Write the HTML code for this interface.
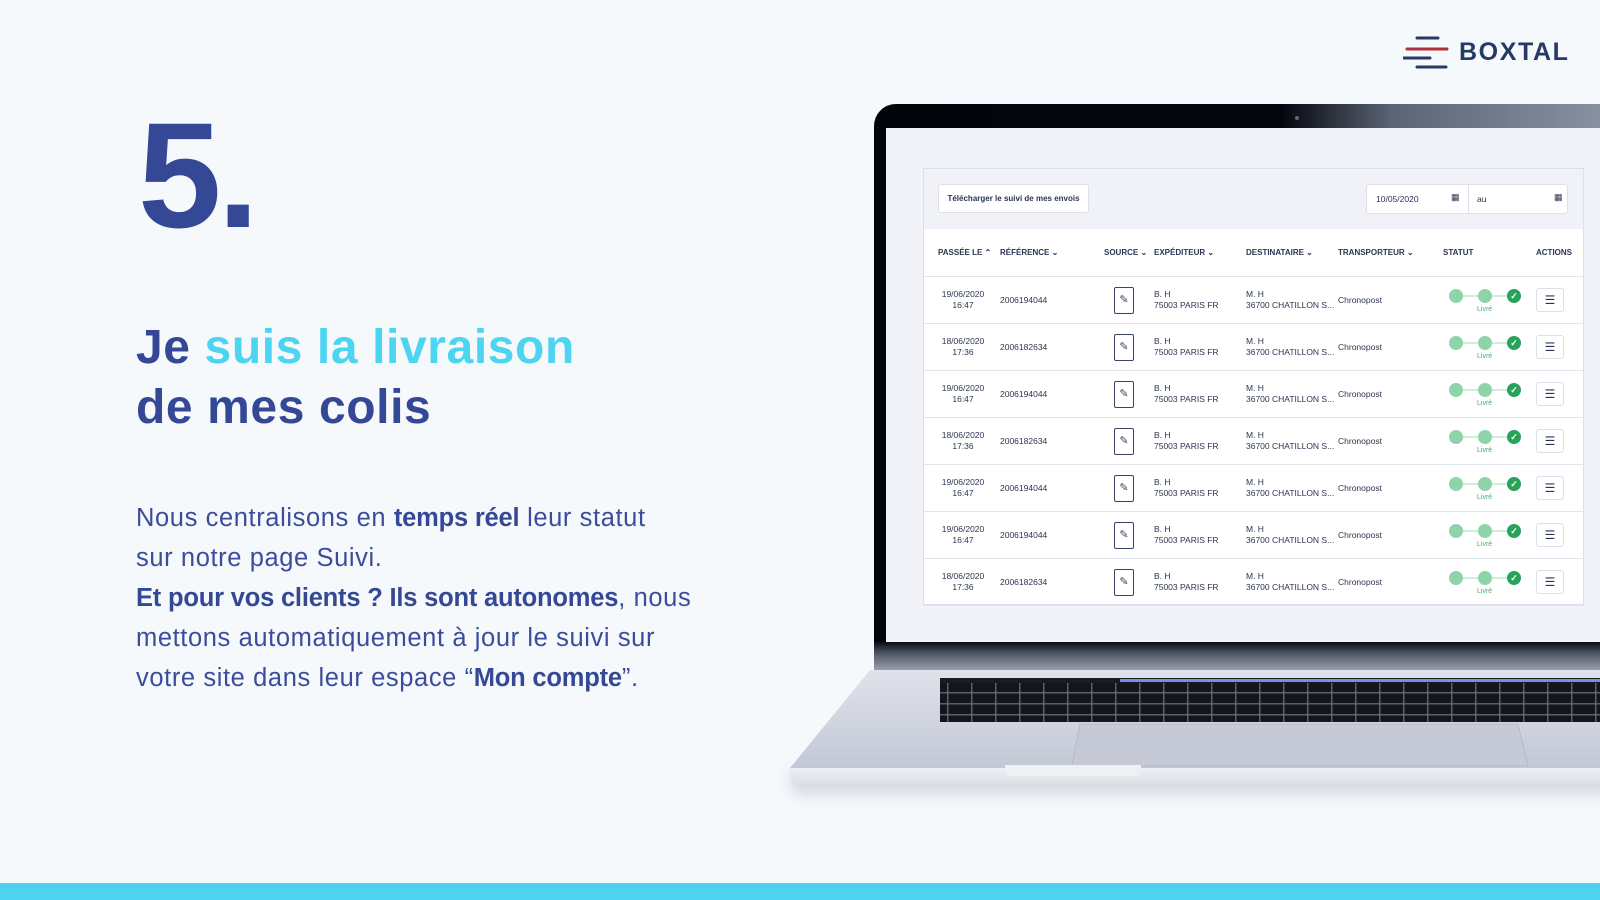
<!DOCTYPE html>
<html><head><meta charset="utf-8">
<style>
*{margin:0;padding:0;box-sizing:border-box}
body{width:1600px;height:900px;overflow:hidden;background:#f5f9fc;font-family:"Liberation Sans",sans-serif;position:relative}
.abs{position:absolute}
.five{left:138px;top:100px;font-size:150px;font-weight:bold;color:#354896;letter-spacing:-4px;line-height:1}
.h{left:136px;font-size:48px;font-weight:bold;color:#354896;line-height:1;white-space:nowrap;letter-spacing:0.6px}
.h span{color:#4dd4f0}
.p{left:136px;top:498px;font-size:25.5px;color:#3c4c9c;line-height:40px;width:600px;font-weight:300;letter-spacing:0.6px;white-space:nowrap}
.p b{font-weight:bold;color:#354896;letter-spacing:-0.2px}
.bar{left:0;top:883px;width:1600px;height:17px;background:#4dd3ef}
.tbl{font-size:8.5px;color:#2b3550}
.th{font-size:8px;font-weight:bold;color:#2b3550;top:248px}
.row{left:923px;width:661px;height:47px;border-bottom:1px solid #e3e5ee}
.dot{width:14px;height:14px;border-radius:50%;background:#8fd4a8}
</style></head><body>
<svg class="abs" style="left:1403px;top:34px" width="48" height="36">
<line x1="14" y1="4" x2="35" y2="4" stroke="#263a66" stroke-width="3" stroke-linecap="round"/>
<line x1="4" y1="15" x2="44" y2="15" stroke="#b2303c" stroke-width="3" stroke-linecap="round"/>
<line x1="1" y1="24" x2="27" y2="24" stroke="#263a66" stroke-width="3" stroke-linecap="round"/>
<line x1="14" y1="33" x2="43" y2="33" stroke="#263a66" stroke-width="3" stroke-linecap="round"/>
</svg>
<div class="abs" style="left:1459px;top:38px;font-size:25px;color:#263a66;letter-spacing:1.6px;font-weight:600">BOXTAL</div>

<div class="abs five">5.</div>
<div class="abs h" style="top:324px">Je <span>suis la livraison</span></div>
<div class="abs h" style="top:384px">de mes colis</div>
<div class="abs p">Nous centralisons en <b>temps réel</b> leur statut<br>sur notre page Suivi.<br><b>Et pour vos clients ? Ils sont autonomes</b>, nous<br>mettons automatiquement à jour le suivi sur<br>votre site dans leur espace “<b>Mon compte</b>”.</div>

<div class="abs" style="left:790px;top:765px;width:820px;height:22px;background:linear-gradient(#f2f3f7,#d8dbe3);border-radius:0 0 0 12px;box-shadow:0 8px 14px rgba(120,130,150,.25)"></div>
<svg class="abs" style="left:780px;top:660px" width="820" height="110">
<defs><linearGradient id="g" x1="0" y1="0" x2="0" y2="1"><stop offset="0" stop-color="#dfe2ea"/><stop offset="1" stop-color="#c3c8d6"/></linearGradient>
<pattern id="k" width="24" height="11" patternUnits="userSpaceOnUse"><rect width="24" height="11" fill="#5a606e"/><rect x="0.5" y="0.5" width="22.5" height="9.5" rx="1" fill="#14161b"/></pattern></defs>
<polygon points="90,10 820,10 820,108 10,108" fill="url(#g)"/>
<rect x="160" y="18" width="660" height="44" fill="url(#k)"/>
<rect x="160" y="18" width="660" height="5" fill="#1a1c22"/>
<rect x="340" y="19" width="480" height="3" fill="#7a8ce8"/>
<polygon points="300,64 738,64 748,106 292,106" fill="#c6cad7" stroke="#a9aebe" stroke-width="0.6"/>
</svg>
<div class="abs" style="left:1005px;top:765px;width:136px;height:11px;background:#eef0f4;border-radius:0 0 6px 6px"></div>
<div class="abs" style="left:874px;top:104px;width:740px;height:566px;background:linear-gradient(90deg,#03050b 0%,#03060d 55%,#5c6475 70%,#8b93a3 100%);border-radius:22px 0 0 0"></div>
<div class="abs" style="left:874px;top:642px;width:740px;height:28px;background:linear-gradient(#0a0c12 0%,#4e5564 40%,#9aa0ad 100%)"></div>
<div class="abs" style="left:1295px;top:116px;width:4px;height:4px;border-radius:50%;background:#667"></div>
<div class="abs" style="left:886px;top:128px;width:714px;height:514px;background:#f2f3f8"></div>
<div class="abs" style="left:923px;top:168px;width:661px;height:437px;background:#fff;border:1px solid #dcdfea"></div>
<div class="abs" style="left:924px;top:169px;width:659px;height:60px;background:#f0f2f7"></div>
<div class="abs tbl" style="left:938px;top:184px;width:151px;height:29px;background:#fff;border:1px solid #dde0ea;border-radius:3px;font-weight:bold;font-size:8px;line-height:27px;text-align:center">Télécharger le suivi de mes envois</div>
<div class="abs tbl" style="left:1366px;top:184px;width:202px;height:30px;background:#fff;border:1px solid #dde0ea;border-radius:3px"></div>
<div class="abs" style="left:1468px;top:185px;width:1px;height:28px;background:#dde0ea"></div>
<div class="abs tbl" style="left:1376px;top:194px;font-size:8.5px">10/05/2020</div>
<div class="abs tbl" style="left:1477px;top:194px;font-size:8.5px">au</div>
<div class="abs tbl" style="left:1451px;top:192px;font-size:9px">▦</div>
<div class="abs tbl" style="left:1554px;top:192px;font-size:9px">▦</div>
<div class="abs th" style="left:938px">PASSÉE LE ⌃</div>
<div class="abs th" style="left:1000px">RÉFÉRENCE ⌄</div>
<div class="abs th" style="left:1104px">SOURCE ⌄</div>
<div class="abs th" style="left:1154px">EXPÉDITEUR ⌄</div>
<div class="abs th" style="left:1246px">DESTINATAIRE ⌄</div>
<div class="abs th" style="left:1338px">TRANSPORTEUR ⌄</div>
<div class="abs th" style="left:1443px">STATUT</div>
<div class="abs th" style="left:1536px">ACTIONS</div>
<div class="abs" style="left:924px;top:276px;width:659px;height:1px;background:#e3e5ee"></div>

<div id="rows"></div>
<script>
var d=[["19/06/2020","16:47","2006194044"],["18/06/2020","17:36","2006182634"],["19/06/2020","16:47","2006194044"],["18/06/2020","17:36","2006182634"],["19/06/2020","16:47","2006194044"],["19/06/2020","16:47","2006194044"],["18/06/2020","17:36","2006182634"]];
var h="";
d.forEach(function(r,i){var t=277+i*47,c=t+23;
h+='<div class="abs row" style="top:'+t+'px"></div>';
h+='<div class="abs tbl" style="left:938px;top:'+(c-11)+'px;width:50px;text-align:center;line-height:11px">'+r[0]+'<br>'+r[1]+'</div>';
h+='<div class="abs tbl" style="left:1000px;top:'+(c-5)+'px">'+r[2]+'</div>';
h+='<div class="abs" style="left:1114px;top:'+(c-13)+'px;width:20px;height:27px;border:1.5px solid #3b4562;border-radius:2px;font-size:11px;text-align:center;line-height:24px;color:#3b4562">✎</div>';
h+='<div class="abs tbl" style="left:1154px;top:'+(c-11)+'px;line-height:11px">B. H<br>75003 PARIS FR</div>';
h+='<div class="abs tbl" style="left:1246px;top:'+(c-11)+'px;line-height:11px">M. H<br>36700 CHATILLON S...</div>';
h+='<div class="abs tbl" style="left:1338px;top:'+(c-5)+'px">Chronopost</div>';
h+='<div class="abs" style="left:1456px;top:'+(c-5)+'px;width:56px;height:2px;background:#cdeedb"></div>';
h+='<div class="abs dot" style="left:1449px;top:'+(c-11)+'px"></div><div class="abs dot" style="left:1478px;top:'+(c-11)+'px"></div>';
h+='<div class="abs dot" style="left:1507px;top:'+(c-11)+'px;background:#27a35a;color:#fff;font-size:9px;text-align:center;line-height:14px;font-weight:bold">✓</div>';
h+='<div class="abs" style="left:1477px;top:'+(c+6)+'px;font-size:7px;color:#3fb06a">Livré</div>';
h+='<div class="abs" style="left:1536px;top:'+(c-12)+'px;width:28px;height:24px;border:1px solid #dde0ea;border-radius:3px;background:#fff;text-align:center;line-height:22px;font-size:12px;color:#2b3550">☰</div>';
});
document.getElementById("rows").innerHTML=h;
</script>
<div class="abs bar"></div>
</body></html>
